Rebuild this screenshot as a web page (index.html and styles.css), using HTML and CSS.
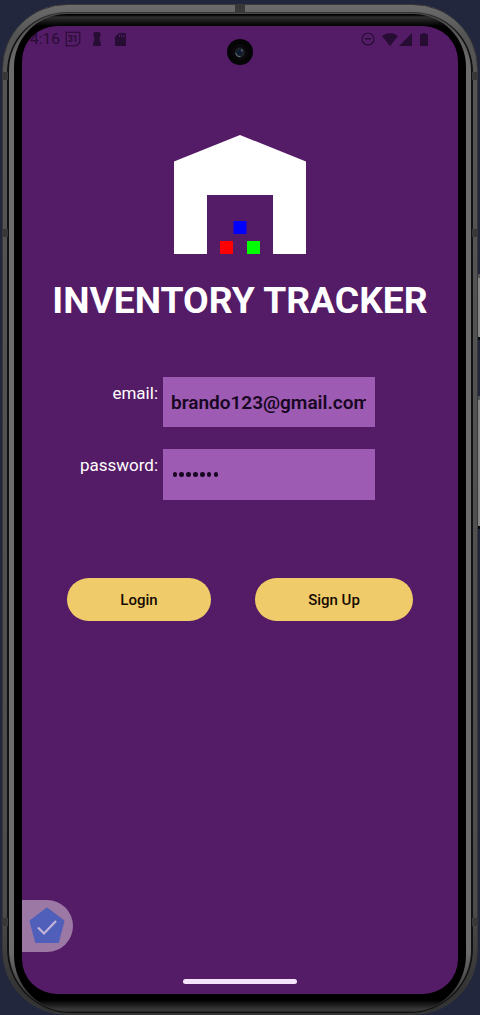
FILE: index.html
```html
<!DOCTYPE html>
<html lang="en">
<head>
<meta charset="utf-8">
<title>Inventory Tracker</title>
<link rel="stylesheet" href="styles.css">
</head>
<body>
<div class="stage">
<i class="side-key power"></i><i class="side-key volume"></i>
<div class="phone"><div class="seam"><div class="rim"><div class="bezel">
<main class="screen">
  <header class="status">
    <span class="clock">4:16</span>
    <svg class="cal" width="16" height="16" viewBox="0 0 16 16"><path d="M1.2 1.2h13.6v10.2l-3.4 3.4H1.2z" fill="none" stroke="currentColor" stroke-width="1.1"/><text x="7.8" y="10.9" text-anchor="middle">31</text></svg>
    <svg class="pawn" width="8" height="14" viewBox="0 0 8 14"><path d="M1.500 0h5l1 1.200v3L6.500 5.400 6.900 9.500 7.800 10.500V14H.2v-3.500l.9-1L1.500 5.400.5 4.200v-3z" fill="currentColor"/></svg>
    <svg class="sd" width="11" height="13" viewBox="0 0 11 13"><path fill-rule="evenodd" d="M4 0h6.200l.8.8V13H0V4zM4 1.800v2.400h1V1.800zm2.200 0v2.400h1V1.800zm2.200 0v2.400h1V1.800z" fill="currentColor"/></svg>
    <span class="space"></span>
    <svg class="dnd" width="14" height="14" viewBox="0 0 14 14"><circle cx="7" cy="7" r="6" fill="none" stroke="currentColor" stroke-width="1.200"/><path d="M4 6h6v1.500H4z" fill="currentColor"/></svg>
    <svg class="wifi" width="16" height="13" viewBox="0 0 16 13"><path d="M0 3Q8-3 16 3L8 13z" fill="currentColor"/></svg>
    <svg class="cell" width="13" height="13" viewBox="0 0 13 13"><path d="M13 0v13H0z" fill="currentColor"/></svg>
    <svg class="battery" width="8" height="13" viewBox="0 0 8 13"><path d="M2.300 0h3.400v1.200H8V13H0V1.200h2.300z" fill="currentColor"/></svg>
  </header>
  <svg class="logo" width="132" height="119" viewBox="0 0 132 119"><path d="M66 0l66 26.500V119H99V60H33v59H0V26.500z" fill="#fff"/><path d="M59.500 86h13v13h-13z" fill="#00f"/><path d="M46 106h13v13H46z" fill="#f00"/><path d="M73 106h13v13H73z" fill="#0f0"/></svg>
  <h1>INVENTORY TRACKER</h1>
  <div class="form">
    <label>email:</label><div class="field"><span>brando123@gmail.com</span></div>
    <label>password:</label><div class="field secret"><i></i><i></i><i></i><i></i><i></i><i></i><i></i></div>
  </div>
  <div class="actions"><button class="login">Login</button><button class="signup">Sign Up</button></div>
  <div class="badge"><svg width="36" height="37" viewBox="0 0 36 37"><path d="M18 1.500L34.500 14 29 35H7L1.500 14z" fill="#505fb9" stroke="#505fb9" stroke-width="2" stroke-linejoin="round"/><path d="M9 20.500l6 6L27 14" fill="none" stroke="#c2b4da" stroke-width="2.200"/></svg></div>
  <div class="home"></div>
  <div class="camera"><svg width="26" height="26" viewBox="0 0 26 26"><circle cx="13" cy="13" r="13" fill="#050407"/><circle cx="13" cy="13" r="8.500" fill="#09090c"/><circle cx="13" cy="13.500" r="5" fill="#1b2029"/><circle cx="12.500" cy="13.500" r="2.400" fill="#0b1b33"/><path d="M8.500 14q1 4 5 4" fill="none" stroke="#64767f" stroke-width="1"/><circle cx="14.800" cy="11.500" r="1" fill="#696078"/></svg></div>
</main>
</div></div></div>
<i class="band top"></i><i class="band left upper"></i><i class="band right upper"></i><i class="band left lower"></i><i class="band right lower"></i><i class="band left first"></i><i class="band right first"></i>
</div>
</div>
</body>
</html>
```
FILE: styles.css
```css
* { box-sizing: border-box; }
html, body { margin: 0; height: 1015px; overflow: hidden; }
body { font-family: Roboto, sans-serif; background: #23273d; }
.stage { position: relative; height: 1015px; padding: 4px 2px 0; overflow: hidden; }
.phone { position: relative; height: 1011px; padding: 7px 4px 1px 4px; border-radius: 65px; border: 1px solid #383838; background: linear-gradient(#6c6c6c, #555 30px, #4c4c4c 900px, #333 990px); }
.seam { height: 100%; padding: 1px 2px; border-radius: 60px 60px 64px 64px; background: linear-gradient(#333, #111 25px, #111); }
.rim { height: 100%; padding: 1px 5px 0; border-radius: 58px 58px 62px 62px; background: linear-gradient(#4a4a4a, #6c6c6c 50px, #6c6c6c 940px, #333 985px); }
.bezel { height: 100%; padding: 12px 8px 16px; border-radius: 53px 53px 57px 57px; background: linear-gradient(#000 0 1px, #303030 3px, #000 12px, #000 calc(100% - 12px), #3b3b3b calc(100% - 2px), #222); }
.screen { position: relative; height: 968px; width: 436px; border-radius: 35px; background: #541b66; overflow: hidden; display: flex; flex-direction: column; align-items: center; }
.status { width: 100%; height: 26px; padding: 0 30px 0 8px; display: flex; align-items: center; color: #270d34; }
.clock { font-size: 15.500px; width: 35px; }
.cal text { font-size: 8.500px; font-weight: 700; fill: currentColor; }
.pawn { margin-left: 12px; }
.sd { margin-left: 14px; }
.space { flex: 1; }
.wifi { margin-left: 7px; }
.cell { margin-left: 1px; }
.battery { margin-left: 8px; }
.logo { margin-top: 83px; flex: none; }
h1 { margin: 24px 0 0; font-size: 37.250px; line-height: 45px; font-weight: 700; color: #fff; white-space: nowrap; }
.form { align-self: stretch; margin: 53.500px 83px 0 20px; display: grid; grid-template-columns: 116px 212px; grid-template-rows: 50.500px 50.500px; column-gap: 5px; row-gap: 22px; }
label { color: #fff; font-size: 17px; line-height: 20px; text-align: right; padding-top: 6px; }
.field { background: #9d5bb3; padding: 0 8px; display: flex; align-items: center; font-size: 19px; font-weight: 600; color: #180722; }
.field span { display: block; width: 195px; overflow: hidden; white-space: nowrap; padding-top: 1px; }
.secret { gap: 2.400px; padding-left: 9.500px; }
.secret i { width: 4.500px; height: 4.500px; border-radius: 50%; background: #180722; }
.actions { align-self: stretch; margin: 78.500px 45px 0; display: flex; justify-content: space-between; }
button { height: 43px; border: 0; padding: 0; border-radius: 22px; background: #f0cb69; color: #160c02; font: 500 15px Roboto, sans-serif; }
.login { width: 144px; }
.signup { width: 158px; }
.badge { align-self: flex-start; margin-top: 279px; width: 51px; height: 52px; padding: 7px 0 0 7px; border-radius: 0 26px 26px 0; background: #9c78a5; }
.home { width: 114px; height: 5px; margin-top: 27px; border-radius: 3px; background: #f6e5fa; }
.camera { position: absolute; left: 205px; top: 13px; width: 26px; height: 26px; }
.camera svg { display: block; }
.side-key { position: absolute; right: 0; width: 3px; background: #858585; border-top: 4px solid #555; border-bottom: 3px solid #080808; }
.power { top: 274px; height: 66px; }
.volume { top: 396px; height: 133px; }
.band { position: absolute; width: 5px; height: 8px; background: #383838; }
.band.top { left: 232px; top: 0; width: 10px; height: 8px; }
.band.left { left: 0; }
.band.right { right: 0; }
.first { top: 67px; }
.upper { top: 224px; }
.lower { top: 913px; }
```
